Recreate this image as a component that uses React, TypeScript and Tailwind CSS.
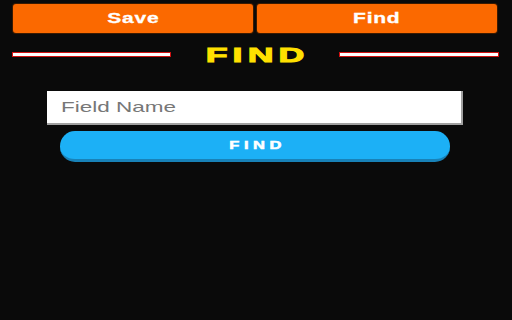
export default function App() {
  return (
    <div
      className="w-[512px] h-[320px] bg-[#0a0a0a] overflow-hidden"
      style={{ fontFamily: '"Liberation Sans", Arial, sans-serif' }}
    >
      <div className="flex gap-[4px] pl-[13px] pr-[15px] pt-[4px]">
        <button className="flex-1 h-[29px] rounded-[3px] bg-[#fb6900] shadow-[0_0_0_1px_#3a1a00] text-white font-bold text-[14px] flex items-center justify-center">
          <span className="inline-block scale-x-150 tracking-[0.5px] [-webkit-text-stroke:0.3px_white]">Save</span>
        </button>
        <button className="flex-1 h-[29px] rounded-[3px] bg-[#fb6900] shadow-[0_0_0_1px_#3a1a00] text-white font-bold text-[14px] flex items-center justify-center">
          <span className="inline-block scale-x-150 tracking-[0.5px] [-webkit-text-stroke:0.3px_white]">Find</span>
        </button>
      </div>

      <div className="flex items-center mt-[11px] h-[20px] pl-[12px] pr-[13px]">
        <div className="w-[159px] h-[5px] bg-white border border-[#d01010]" />
        <div className="flex-1 flex justify-center">
          <span className="inline-block scale-x-[1.7] text-[21px] font-bold text-[#ffe000] tracking-[3px] leading-none pl-[3px] [-webkit-text-stroke:1px_#ffe000]">
            FIND
          </span>
        </div>
        <div className="w-[160px] h-[5px] bg-white border border-[#d01010]" />
      </div>

      <div className="pl-[47px] mt-[27px]">
        <div className="w-[416px] h-[34px] bg-white border-r-2 border-b-2 border-[#a0a0a0] flex items-center pl-[14px]">
          <span className="inline-block origin-left scale-x-150 text-[15px] text-[#777777]">
            Field Name
          </span>
        </div>
      </div>

      <div className="pl-[60px] mt-[6px]">
        <button className="w-[390px] h-[31px] rounded-[15px] bg-[#1cb0f6] border-b-[3px] border-[#1882b8] text-white font-bold text-[11px] flex items-center justify-center">
          <span className="inline-block scale-x-150 tracking-[3px] pl-[3px] [-webkit-text-stroke:0.5px_white]">FIND</span>
        </button>
      </div>
    </div>
  );
}
